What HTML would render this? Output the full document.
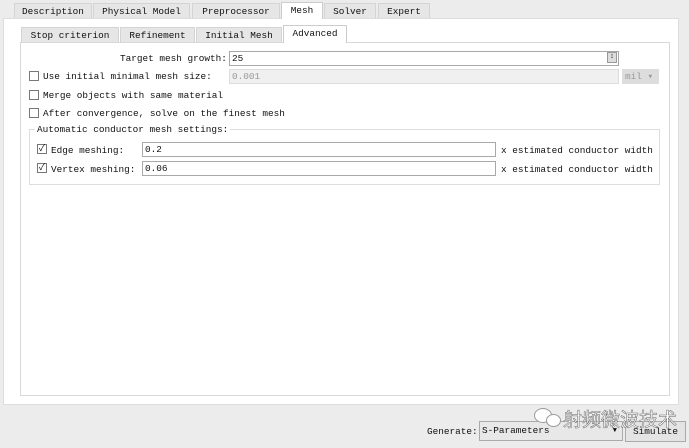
<!DOCTYPE html>
<html><head><style>
body{margin:0;width:689px;height:448px;background:#ececec;position:relative;overflow:hidden;font-family:"Liberation Mono","Noto Sans CJK SC",monospace;font-size:9.4px;color:#111}
.a{position:absolute;white-space:nowrap}
.tab{position:absolute;height:15px;line-height:15px;text-align:center;background:#e6e6e6;border:1px solid #d4d4d4;border-bottom:none;box-sizing:border-box}
.sel{background:#fff;border-color:#ccc}
.in{position:absolute;height:15px;border:1px solid #a8a8a8;background:#fff;box-sizing:border-box;padding-left:2px;line-height:13px}
.cb{position:absolute;width:10px;height:10px;border:1px solid #777;background:#fff;box-sizing:border-box}
</style></head><body>
<div class="a" style="left:3px;top:18px;width:676px;height:387px;background:#fff;border:1px solid #ddd;box-sizing:border-box"></div>
<div class="tab" style="left:14px;top:3px;width:78px">Description</div>
<div class="tab" style="left:93px;top:3px;width:97px">Physical Model</div>
<div class="tab" style="left:192px;top:3px;width:88px">Preprocessor</div>
<div class="tab sel" style="left:281px;top:2px;width:42px;height:17px">Mesh</div>
<div class="tab" style="left:324px;top:3px;width:52px">Solver</div>
<div class="tab" style="left:378px;top:3px;width:52px">Expert</div>
<div class="a" style="left:20px;top:42px;width:650px;height:354px;border:1px solid #d8d8d8;box-sizing:border-box;background:#fff"></div>
<div class="tab" style="left:21px;top:27px;width:98px">Stop criterion</div>
<div class="tab" style="left:120px;top:27px;width:75px">Refinement</div>
<div class="tab" style="left:196px;top:27px;width:86px">Initial Mesh</div>
<div class="tab sel" style="left:283px;top:25px;width:64px;height:18px">Advanced</div>
<div class="a" style="left:120px;top:53px">Target mesh growth:</div>
<div class="in" style="left:229px;top:51px;width:390px">25</div>
<div class="a" style="left:607px;top:52px;width:10px;height:11px;background:#ddd;border:1px solid #999;box-sizing:border-box;font-size:7px;line-height:9px;text-align:center">↕</div>
<div class="cb" style="left:29px;top:71px"></div><div class="a" style="left:43px;top:71px">Use initial minimal mesh size:</div>
<div class="in" style="left:229px;top:69px;width:390px;background:#f0f0f0;border-color:#ddd;color:#999">0.001</div>
<div class="a" style="left:622px;top:69px;width:37px;height:15px;background:#ddd;color:#999;line-height:15px;padding-left:3px;box-sizing:border-box">mil ▾</div>
<div class="cb" style="left:29px;top:90px"></div><div class="a" style="left:43px;top:90px">Merge objects with same material</div>
<div class="cb" style="left:29px;top:108px"></div><div class="a" style="left:43px;top:108px">After convergence, solve on the finest mesh</div>
<div class="a" style="left:29px;top:129px;width:631px;height:56px;border:1px solid #ddd;box-sizing:border-box"></div>
<div class="a" style="left:35px;top:124px;background:#fff;padding:0 2px">Automatic conductor mesh settings:</div>
<div class="cb" style="left:37px;top:144px;font-size:9px;line-height:8px;text-align:center">✓</div><div class="a" style="left:51px;top:145px">Edge meshing:</div>
<div class="in" style="left:142px;top:142px;width:354px">0.2</div>
<div class="a" style="left:501px;top:145px">x estimated conductor width</div>
<div class="cb" style="left:37px;top:163px;font-size:9px;line-height:8px;text-align:center">✓</div><div class="a" style="left:51px;top:164px">Vertex meshing:</div>
<div class="in" style="left:142px;top:161px;width:354px">0.06</div>
<div class="a" style="left:501px;top:164px">x estimated conductor width</div>
<div class="a" style="left:427px;top:426px">Generate:</div>
<div class="a" style="left:479px;top:421px;width:144px;height:20px;border:1px solid #aaa;box-sizing:border-box;background:#e8e8e8;line-height:18px;padding-left:2px">S-Parameters<span style="position:absolute;right:5px;font-size:7px">▼</span></div>
<div class="a" style="left:625px;top:421px;width:61px;height:21px;border:1px solid #aaa;box-sizing:border-box;background:#e4e4e4;line-height:19px;text-align:center">Simulate</div>
<div class="a" style="left:534px;top:408px;width:16px;height:13px;border-radius:50%;background:#fff;border:1px solid #999"></div>
<div class="a" style="left:546px;top:414px;width:13px;height:11px;border-radius:50%;background:#fff;border:1px solid #999"></div>
<div class="a" style="left:563px;top:405px;font-family:'Noto Sans CJK SC',sans-serif;font-size:19px;color:#fff;-webkit-text-stroke:0.5px #666">射频微波技术</div>
</body></html>
